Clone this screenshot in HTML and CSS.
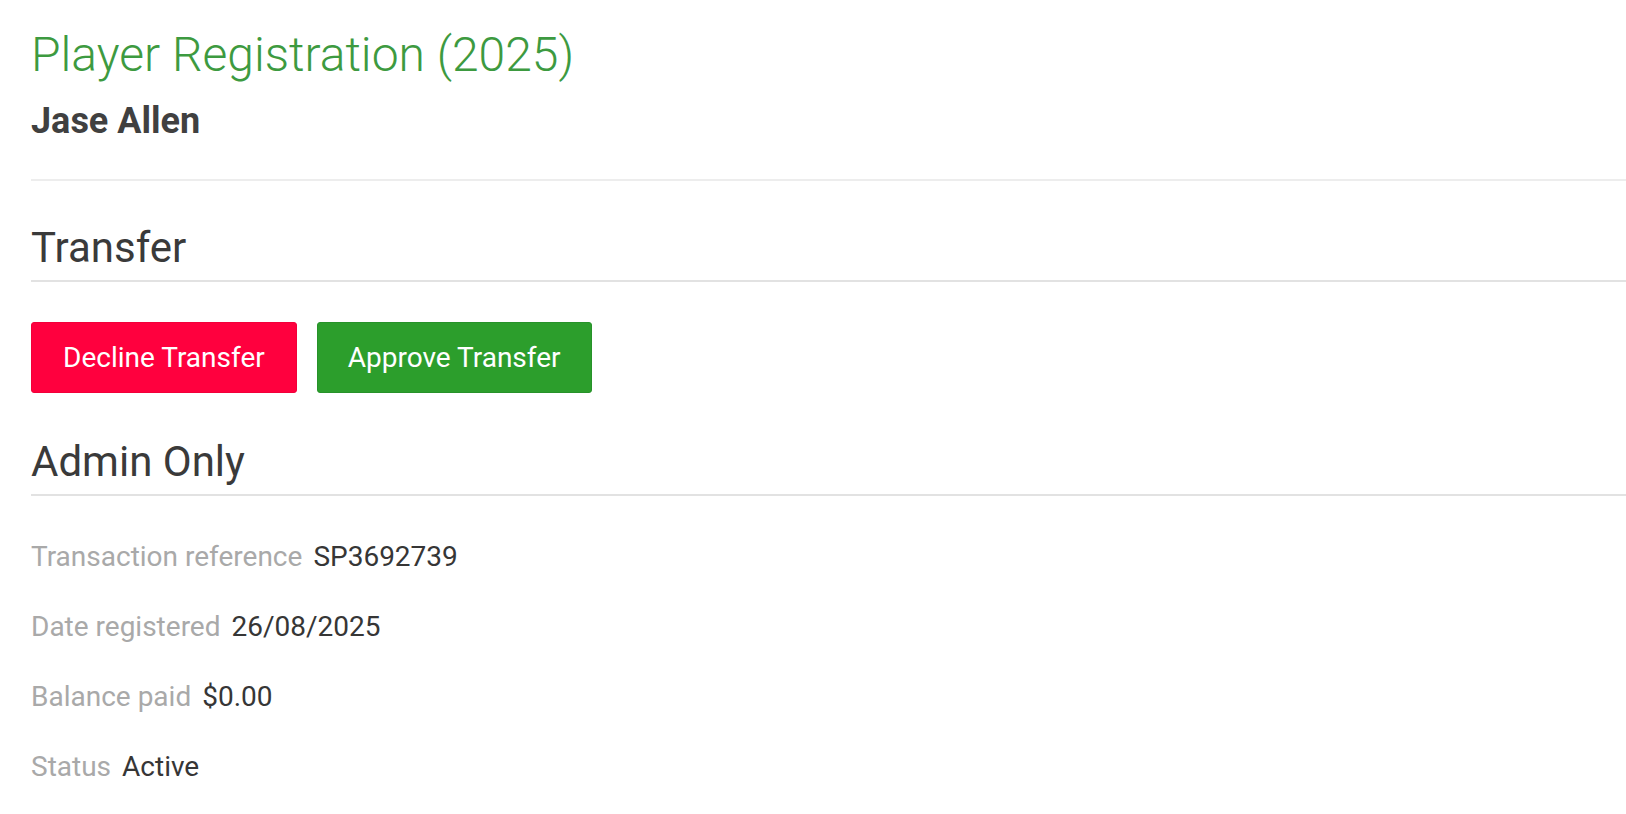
FILE: index.html
```html
<!DOCTYPE html>
<html>
<head>
<meta charset="utf-8">
<link rel="stylesheet" href="styles.css">
</head>
<body>
<div class="page">
  <header class="head">
    <h1 class="title">Player Registration (2025)</h1>
    <div class="player">Jase Allen</div>
  </header>
  <hr class="rule">
  <section class="section">
    <h2 class="section-title">Transfer</h2>
    <div class="actions">
      <button class="btn btn-decline">Decline Transfer</button>
      <button class="btn btn-approve">Approve Transfer</button>
    </div>
  </section>
  <section class="section">
    <h2 class="section-title">Admin Only</h2>
    <dl class="details">
      <div class="row"><dt>Transaction reference</dt><dd>SP3692739</dd></div>
      <div class="row"><dt>Date registered</dt><dd>26/08/2025</dd></div>
      <div class="row"><dt>Balance paid</dt><dd>$0.00</dd></div>
      <div class="row"><dt>Status</dt><dd>Active</dd></div>
    </dl>
  </section>
</div>
</body>
</html>
```

FILE: styles.css
```css
html, body {
  margin: 0;
  padding: 0;
  background: #fff;
}
body {
  font-family: Roboto, "Liberation Sans", sans-serif;
  color: #3a3a3a;
}
.page {
  padding: 28px 0 0 31px;
}
.title {
  margin: 0;
  font-size: 48px;
  line-height: 53px;
  font-weight: 300;
  color: #3d9a40;
}
.player {
  margin-top: 19px;
  font-size: 36px;
  line-height: 42px;
  font-weight: 700;
  color: #404040;
}
.rule {
  margin: 37px 0 0 0;
  border: 0;
  border-top: 2px solid #ededed;
  height: 0;
}
.section-title {
  margin: 0;
  font-size: 42px;
  line-height: 48px;
  font-weight: 400;
  color: #3a3a3a;
  border-bottom: 2px solid #e2e2e2;
  padding-bottom: 8px;
}
.section:first-of-type .section-title {
  margin-top: 43px;
}
.actions {
  display: flex;
  gap: 20px;
  margin-top: 40px;
}
.btn {
  font-family: Roboto, "Liberation Sans", sans-serif;
  font-size: 28px;
  color: #fff;
  border: 1px solid transparent;
  border-radius: 3px;
  height: 71px;
  padding: 0 31px;
  cursor: pointer;
}
.btn-decline {
  background: #ff003e;
  border-color: #f2003a;
}
.btn-approve {
  background: #2c9e2c;
  border-color: #27922a;
  padding: 0 30px;
}
.section + .section .section-title {
  margin-top: 45px;
}
.details {
  margin: 46px 0 0 0;
}
.row {
  display: flex;
  gap: 11px;
  font-size: 28px;
  line-height: 30px;
  margin-bottom: 40px;
}
.row dt {
  color: #a9a9a9;
}
.row dd {
  margin: 0;
  color: #363636;
}
```
